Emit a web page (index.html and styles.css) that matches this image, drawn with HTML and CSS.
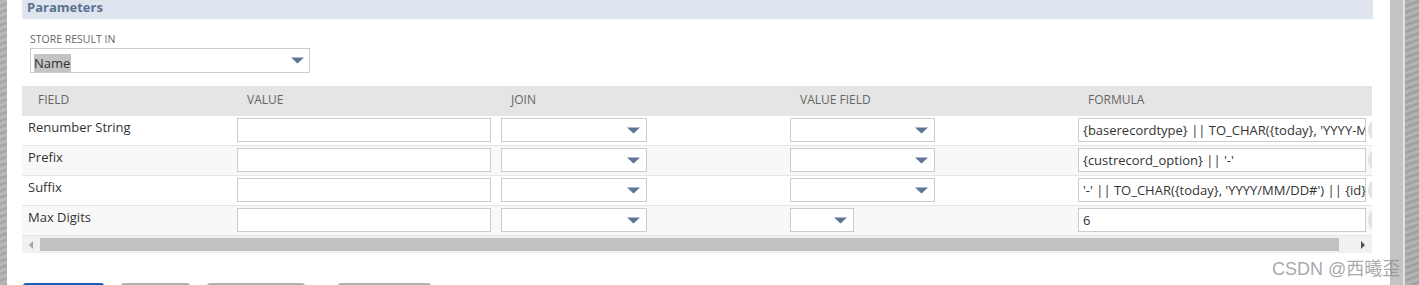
FILE: index.html
```html
<!DOCTYPE html>
<html lang="en">
  <head>
    <meta charset="UTF-8" />
    <meta name="viewport" content="width=device-width, initial-scale=1.0" />
    <title>Parameters</title>
    <link rel="stylesheet" href="styles.css">
  </head>

  <body>
    <div class="frame-left"></div>

    <div class="main">
      <div class="section-head">Parameters</div>

      <div class="store">
        <label class="field-label" for="store">STORE RESULT IN</label>
        <div class="select store-select" id="store">
          <span class="selected">Name</span>
          <svg class="arrow" width="13" height="7" viewBox="0 0 13 7"><path d="M0 0.5 H13 L6.5 6.5 Z" /></svg>
        </div>
      </div>

      <div class="grid-wrap">
        <div class="grid-row grid-head">
          <div class="cell first">FIELD</div>
          <div class="cell">VALUE</div>
          <div class="cell">JOIN</div>
          <div class="cell">VALUE FIELD</div>
          <div class="cell">FORMULA</div>
        </div>

        <div class="grid-row">
          <div class="cell first">Renumber String</div>
          <div class="cell"><div class="input value-input"></div></div>
          <div class="cell"><div class="select join-select"><svg class="arrow" width="13" height="7" viewBox="0 0 13 7"><path d="M0 0.5 H13 L6.5 6.5 Z" /></svg></div></div>
          <div class="cell"><div class="select vf-select"><svg class="arrow" width="13" height="7" viewBox="0 0 13 7"><path d="M0 0.5 H13 L6.5 6.5 Z" /></svg></div></div>
          <div class="cell formula"><div class="input formula-input">{baserecordtype} || TO_CHAR({today}, 'YYYY-MM-DD') || {id}</div><span class="knob"></span></div>
        </div>

        <div class="grid-row alt">
          <div class="cell first">Prefix</div>
          <div class="cell"><div class="input value-input"></div></div>
          <div class="cell"><div class="select join-select"><svg class="arrow" width="13" height="7" viewBox="0 0 13 7"><path d="M0 0.5 H13 L6.5 6.5 Z" /></svg></div></div>
          <div class="cell"><div class="select vf-select"><svg class="arrow" width="13" height="7" viewBox="0 0 13 7"><path d="M0 0.5 H13 L6.5 6.5 Z" /></svg></div></div>
          <div class="cell formula"><div class="input formula-input">{custrecord_option} || '-'</div><span class="knob"></span></div>
        </div>

        <div class="grid-row">
          <div class="cell first">Suffix</div>
          <div class="cell"><div class="input value-input"></div></div>
          <div class="cell"><div class="select join-select"><svg class="arrow" width="13" height="7" viewBox="0 0 13 7"><path d="M0 0.5 H13 L6.5 6.5 Z" /></svg></div></div>
          <div class="cell"><div class="select vf-select"><svg class="arrow" width="13" height="7" viewBox="0 0 13 7"><path d="M0 0.5 H13 L6.5 6.5 Z" /></svg></div></div>
          <div class="cell formula"><div class="input formula-input">'-' || TO_CHAR({today}, 'YYYY/MM/DD#') || {id}</div><span class="knob"></span></div>
        </div>

        <div class="grid-row alt">
          <div class="cell first">Max Digits</div>
          <div class="cell"><div class="input value-input"></div></div>
          <div class="cell"><div class="select join-select"><svg class="arrow" width="13" height="7" viewBox="0 0 13 7"><path d="M0 0.5 H13 L6.5 6.5 Z" /></svg></div></div>
          <div class="cell"><div class="select vf-select short"><svg class="arrow" width="13" height="7" viewBox="0 0 13 7"><path d="M0 0.5 H13 L6.5 6.5 Z" /></svg></div></div>
          <div class="cell formula"><div class="input formula-input">6</div><span class="knob"></span></div>
        </div>

        <div class="hscroll">
          <span class="scroll-left"></span>
          <div class="scroll-thumb"></div>
          <span class="scroll-right"></span>
        </div>
      </div>

      <div class="buttons">
        <div class="btn primary"></div>
        <div class="btn b2"></div>
        <div class="btn b3"></div>
        <div class="btn b4"></div>
      </div>
    </div>

    <div class="frame-right">
      <div class="rail"></div>
      <div class="edge"></div>
      <div class="backdrop"></div>
    </div>

    <div class="watermark">CSDN @西曦歪</div>
  </body>
</html>
```

FILE: styles.css
```css
html,
body {
  margin: 0;
  height: 285px;
  overflow: hidden;
}

body {
  display: flex;
  font-family: "Open Sans", "Noto Sans CJK SC", sans-serif;
  color: #333;
  background: #fff;
}

.frame-left {
  width: 7px;
  background: repeating-linear-gradient(
    160deg,
    #a9a9a9 0px,
    #bdbdbd 3px,
    #9d9d9d 6px
  );
}

.main {
  flex: 1;
  padding: 0 17px 0 15px;
}

.section-head {
  height: 19px;
  background-color: #dfe5ef;
  color: #5c7193;
  font-weight: 700;
  font-size: 13px;
  line-height: 14px;
  padding-left: 5px;
}

.store {
  padding-left: 8px;
  margin-top: 14px;
}

.field-label {
  display: block;
  font-size: 10.5px;
  line-height: 13px;
  color: #666;
  margin-bottom: 2px;
}

.select,
.input {
  box-sizing: border-box;
  height: 24px;
  border: 1px solid #cccccc;
  background: #fff;
  position: relative;
}

.arrow {
  position: absolute;
  right: 6px;
  top: 8px;
  fill: #5f7596;
}

.store-select {
  width: 280px;
  height: 25px;
  padding: 2px 3px;
}

.store-select .arrow {
  right: 5px;
}

.selected {
  display: inline-block;
  background-color: #c4c4c4;
  font-size: 13px;
  line-height: 18px;
  padding-right: 1px;
}

.grid-wrap {
  margin-top: 13px;
  width: 1350px;
  overflow: hidden;
}

.grid-row {
  display: grid;
  grid-template-columns: 210px 264px 289px 288px 320px;
  height: 30px;
  box-sizing: border-box;
  border-bottom: 1px solid #e6e6e6;
  background: #fff;
}

.grid-row.alt {
  background: #f8f8f8;
}

.grid-head {
  background: #e5e5e5;
  border-bottom: 0;
}

.grid-head .cell {
  font-size: 12px;
  line-height: 28px;
  color: #666;
  padding: 0 0 0 15px;
}

.grid-head .cell.first {
  padding-left: 16px;
}

.cell {
  padding: 2px 5px 0;
  font-size: 13px;
  line-height: 18px;
  white-space: nowrap;
}

.cell.first {
  padding-left: 6px;
}

.value-input {
  width: 254px;
}

.join-select {
  width: 146px;
}

.vf-select {
  width: 145px;
}

.vf-select.short {
  width: 64px;
}

.formula {
  display: flex;
  align-items: center;
  align-self: start;
  gap: 2px;
}

.formula-input {
  width: 288px;
  flex: none;
  overflow: hidden;
  padding: 0 4px;
  line-height: 22px;
  font-size: 13px;
}

.knob {
  width: 14px;
  height: 20px;
  border-radius: 50%;
  background: #e2e2e2;
  flex: none;
}

.hscroll {
  height: 17px;
  background: #f1f1f1;
  display: flex;
  align-items: center;
  position: relative;
}

.scroll-left {
  width: 0;
  height: 0;
  border-top: 4px solid transparent;
  border-bottom: 4px solid transparent;
  border-right: 4px solid #a3a3a3;
  margin-left: 7px;
}

.scroll-thumb {
  margin-left: 7px;
  width: 1299px;
  height: 13px;
  background: #c1c1c1;
}

.scroll-right {
  width: 0;
  height: 0;
  border-top: 4px solid transparent;
  border-bottom: 4px solid transparent;
  border-left: 4px solid #505050;
  margin-left: 22px;
}

.buttons {
  display: flex;
  margin-top: 30px;
  padding-left: 1px;
  height: 2px;
  overflow: hidden;
}

.btn {
  height: 22px;
  box-sizing: border-box;
  border: 1px solid #b2b2b2;
  border-top-width: 2px;
  border-radius: 3px;
  background: #efefef;
}

.btn.primary {
  width: 81px;
  background: #1d62c4;
  border-color: #1a5cb8;
}

.btn.b2 {
  width: 69px;
  margin-left: 17px;
}

.btn.b3 {
  width: 98px;
  margin-left: 17px;
}

.btn.b4 {
  width: 93px;
  margin-left: 33px;
}

.frame-right {
  display: flex;
  width: 29px;
}

.rail {
  width: 13px;
  background: #c4c4c4;
}

.edge {
  width: 2px;
  background: #e2e2e2;
}

.backdrop {
  flex: 1;
  background: repeating-linear-gradient(
    160deg,
    #a0a0a0 0px,
    #b8b8b8 3px,
    #9a9a9a 6px
  );
}

.watermark {
  position: absolute;
  left: 1272px;
  top: 254px;
  font-family: "Liberation Sans", "Noto Sans CJK SC", sans-serif;
  font-size: 18px;
  color: rgba(140, 140, 140, 0.75);
}
```
